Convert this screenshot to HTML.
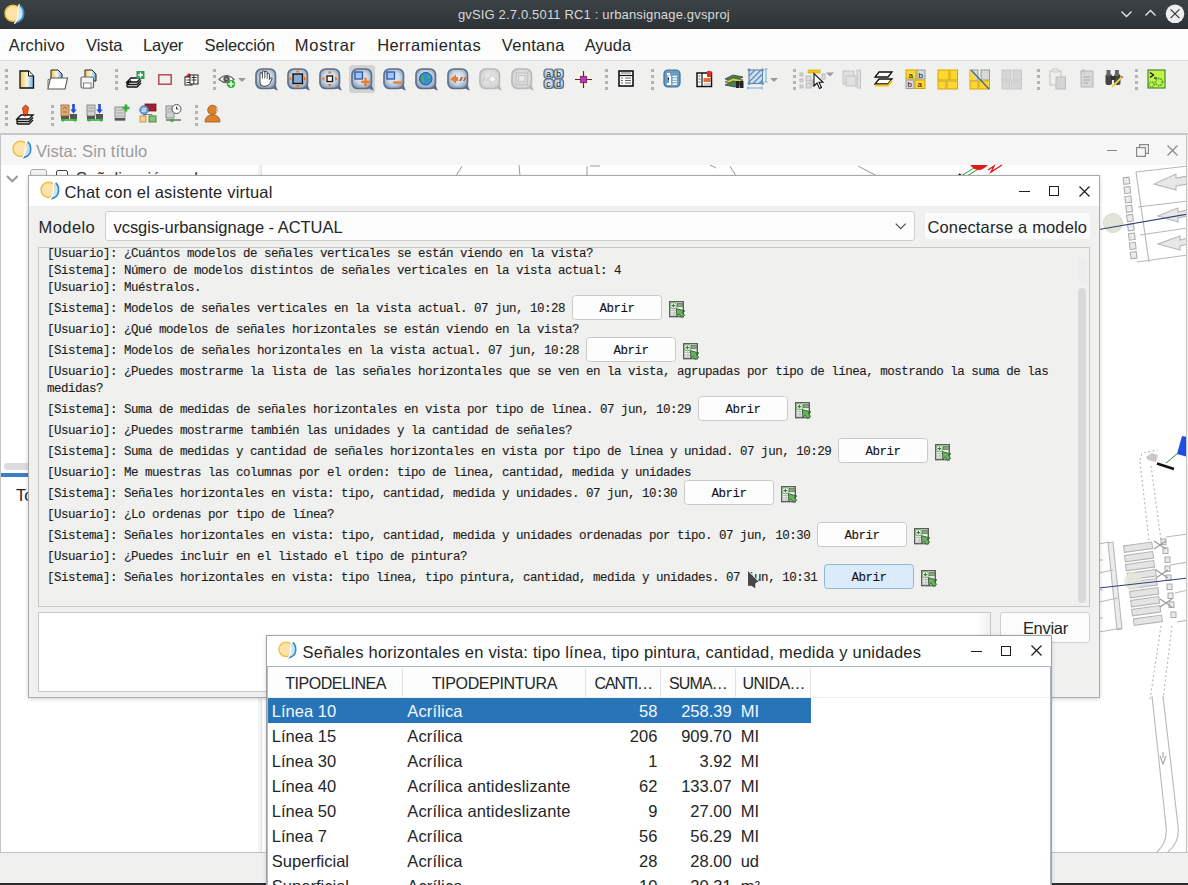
<!DOCTYPE html>
<html><head><meta charset="utf-8"><style>
html,body{margin:0;padding:0;width:1188px;height:885px;overflow:hidden;background:#f0f0ee;position:relative}
.t{position:absolute;white-space:pre;line-height:0;}
svg{overflow:visible}
</style></head><body>
<div style="position:absolute;left:0px;top:0px;width:1188px;height:29px;background:linear-gradient(#3c4347,#2d3236)"></div><svg style="position:absolute;left:4px;top:3px" width="21" height="21" viewBox="0 0 21 21"><g transform="scale(1.05)">
    <circle cx="8.6" cy="9.8" r="7.6" fill="#fde3a8" stroke="#efbd48" stroke-width="1.5"/>
    <path d="M14.5 1.8 Q19.2 5 18.8 11 Q18.2 17.8 10.5 19.2 Q14.2 15 14.3 10 Q14.3 5.5 14.5 1.8 Z" fill="#c3e6f8"/>
    <path d="M15.8 2.8 Q18.9 5.5 18.6 11 Q18.1 17.4 10.8 18.8" stroke="#3a88cc" stroke-width="1.7" fill="none"/>
    <path d="M14.6 1 Q12.8 5 13.3 10 Q13.6 15.5 9.8 19.8" stroke="#ffffff" stroke-width="1.2" fill="none"/></g></svg><span class=t id="title" style="left:457.90px;top:14.50px;font-family:'Liberation Sans', sans-serif;font-size:13px;color:#d6d8d9;letter-spacing:0.163px;">gvSIG 2.7.0.5011 RC1 : urbansignage.gvsproj</span><svg style="position:absolute;left:1121px;top:11px" width="12" height="7" viewBox="0 0 12 7"><path d="M0.5 0.5 L5.5 5.5 L10.5 0.5" stroke="#e8e8e8" stroke-width="1.3" fill="none"/></svg><svg style="position:absolute;left:1145px;top:10px" width="12" height="7" viewBox="0 0 12 7"><path d="M0.5 5.5 L5.5 0.5 L10.5 5.5" stroke="#e8e8e8" stroke-width="1.3" fill="none"/></svg><svg style="position:absolute;left:1165px;top:4px" width="20" height="20" viewBox="0 0 20 20"><circle cx="10" cy="9.8" r="9.3" fill="#eeeeee"/><path d="M5.6 5.4 L14.4 14.2 M14.4 5.4 L5.6 14.2" stroke="#31363b" stroke-width="1.2"/></svg><div style="position:absolute;left:0px;top:29px;width:1188px;height:31px;background:#fcfcfc"></div><div style="position:absolute;left:0px;top:60px;width:1188px;height:1px;background:#d9d9d9"></div><span class=t id="m1" style="left:8.80px;top:45.28px;font-family:'Liberation Sans', sans-serif;font-size:16.5px;color:#232627;letter-spacing:0.153px;">Archivo</span><span class=t id="m2" style="left:85.90px;top:45.28px;font-family:'Liberation Sans', sans-serif;font-size:16.5px;color:#232627;letter-spacing:0.042px;">Vista</span><span class=t id="m3" style="left:143.10px;top:45.28px;font-family:'Liberation Sans', sans-serif;font-size:16.5px;color:#232627;letter-spacing:-0.256px;">Layer</span><span class=t id="m4" style="left:204.60px;top:45.28px;font-family:'Liberation Sans', sans-serif;font-size:16.5px;color:#232627;letter-spacing:-0.150px;">Selección</span><span class=t id="m5" style="left:294.80px;top:45.28px;font-family:'Liberation Sans', sans-serif;font-size:16.5px;color:#232627;letter-spacing:0.725px;">Mostrar</span><span class=t id="m6" style="left:377.20px;top:45.28px;font-family:'Liberation Sans', sans-serif;font-size:16.5px;color:#232627;letter-spacing:0.404px;">Herramientas</span><span class=t id="m7" style="left:501.70px;top:45.28px;font-family:'Liberation Sans', sans-serif;font-size:16.5px;color:#232627;letter-spacing:0.348px;">Ventana</span><span class=t id="m8" style="left:584.70px;top:45.28px;font-family:'Liberation Sans', sans-serif;font-size:16.5px;color:#232627;letter-spacing:-0.020px;">Ayuda</span><div style="position:absolute;left:0px;top:61px;width:1188px;height:72px;background:#f0f0ee"></div><div style="position:absolute;left:0px;top:133px;width:1188px;height:1px;background:#c9c9c9"></div><div style="position:absolute;left:5px;top:69px;width:3px;height:3px;background:#b3b3b3"></div><div style="position:absolute;left:5px;top:75px;width:3px;height:3px;background:#b3b3b3"></div><div style="position:absolute;left:5px;top:81px;width:3px;height:3px;background:#b3b3b3"></div><div style="position:absolute;left:5px;top:87px;width:3px;height:3px;background:#b3b3b3"></div><div style="position:absolute;left:115px;top:69px;width:3px;height:3px;background:#b3b3b3"></div><div style="position:absolute;left:115px;top:75px;width:3px;height:3px;background:#b3b3b3"></div><div style="position:absolute;left:115px;top:81px;width:3px;height:3px;background:#b3b3b3"></div><div style="position:absolute;left:115px;top:87px;width:3px;height:3px;background:#b3b3b3"></div><div style="position:absolute;left:213px;top:69px;width:3px;height:3px;background:#b3b3b3"></div><div style="position:absolute;left:213px;top:75px;width:3px;height:3px;background:#b3b3b3"></div><div style="position:absolute;left:213px;top:81px;width:3px;height:3px;background:#b3b3b3"></div><div style="position:absolute;left:213px;top:87px;width:3px;height:3px;background:#b3b3b3"></div><div style="position:absolute;left:605px;top:69px;width:3px;height:3px;background:#b3b3b3"></div><div style="position:absolute;left:605px;top:75px;width:3px;height:3px;background:#b3b3b3"></div><div style="position:absolute;left:605px;top:81px;width:3px;height:3px;background:#b3b3b3"></div><div style="position:absolute;left:605px;top:87px;width:3px;height:3px;background:#b3b3b3"></div><div style="position:absolute;left:651px;top:69px;width:3px;height:3px;background:#b3b3b3"></div><div style="position:absolute;left:651px;top:75px;width:3px;height:3px;background:#b3b3b3"></div><div style="position:absolute;left:651px;top:81px;width:3px;height:3px;background:#b3b3b3"></div><div style="position:absolute;left:651px;top:87px;width:3px;height:3px;background:#b3b3b3"></div><div style="position:absolute;left:793px;top:69px;width:3px;height:3px;background:#b3b3b3"></div><div style="position:absolute;left:793px;top:75px;width:3px;height:3px;background:#b3b3b3"></div><div style="position:absolute;left:793px;top:81px;width:3px;height:3px;background:#b3b3b3"></div><div style="position:absolute;left:793px;top:87px;width:3px;height:3px;background:#b3b3b3"></div><div style="position:absolute;left:1037px;top:69px;width:3px;height:3px;background:#b3b3b3"></div><div style="position:absolute;left:1037px;top:75px;width:3px;height:3px;background:#b3b3b3"></div><div style="position:absolute;left:1037px;top:81px;width:3px;height:3px;background:#b3b3b3"></div><div style="position:absolute;left:1037px;top:87px;width:3px;height:3px;background:#b3b3b3"></div><div style="position:absolute;left:1135px;top:69px;width:3px;height:3px;background:#b3b3b3"></div><div style="position:absolute;left:1135px;top:75px;width:3px;height:3px;background:#b3b3b3"></div><div style="position:absolute;left:1135px;top:81px;width:3px;height:3px;background:#b3b3b3"></div><div style="position:absolute;left:1135px;top:87px;width:3px;height:3px;background:#b3b3b3"></div><div style="position:absolute;left:5px;top:105px;width:3px;height:3px;background:#b3b3b3"></div><div style="position:absolute;left:5px;top:111px;width:3px;height:3px;background:#b3b3b3"></div><div style="position:absolute;left:5px;top:117px;width:3px;height:3px;background:#b3b3b3"></div><div style="position:absolute;left:5px;top:123px;width:3px;height:3px;background:#b3b3b3"></div><div style="position:absolute;left:51px;top:105px;width:3px;height:3px;background:#b3b3b3"></div><div style="position:absolute;left:51px;top:111px;width:3px;height:3px;background:#b3b3b3"></div><div style="position:absolute;left:51px;top:117px;width:3px;height:3px;background:#b3b3b3"></div><div style="position:absolute;left:51px;top:123px;width:3px;height:3px;background:#b3b3b3"></div><div style="position:absolute;left:195px;top:105px;width:3px;height:3px;background:#b3b3b3"></div><div style="position:absolute;left:195px;top:111px;width:3px;height:3px;background:#b3b3b3"></div><div style="position:absolute;left:195px;top:117px;width:3px;height:3px;background:#b3b3b3"></div><div style="position:absolute;left:195px;top:123px;width:3px;height:3px;background:#b3b3b3"></div><div style="position:absolute;left:0px;top:134px;width:1188px;height:751px;background:#f0f0ee"></div><div style="position:absolute;left:0px;top:134px;width:1187px;height:1px;background:#c4c4c4"></div><div style="position:absolute;left:0px;top:134px;width:1px;height:718px;background:#c4c4c4"></div><div style="position:absolute;left:1186px;top:134px;width:1px;height:718px;background:#c4c4c4"></div><div style="position:absolute;left:1px;top:135px;width:1185px;height:30px;background:#f6f6f6"></div><svg style="position:absolute;left:12px;top:139px" width="20" height="20" viewBox="0 0 20 20"><g transform="scale(1.0)">
    <circle cx="8.6" cy="9.8" r="7.6" fill="#fde3a8" stroke="#efbd48" stroke-width="1.5"/>
    <path d="M14.5 1.8 Q19.2 5 18.8 11 Q18.2 17.8 10.5 19.2 Q14.2 15 14.3 10 Q14.3 5.5 14.5 1.8 Z" fill="#c3e6f8"/>
    <path d="M15.8 2.8 Q18.9 5.5 18.6 11 Q18.1 17.4 10.8 18.8" stroke="#3a88cc" stroke-width="1.7" fill="none"/>
    <path d="M14.6 1 Q12.8 5 13.3 10 Q13.6 15.5 9.8 19.8" stroke="#ffffff" stroke-width="1.2" fill="none"/></g></svg><span class=t id="vtitle" style="left:35.90px;top:151.28px;font-family:'Liberation Sans', sans-serif;font-size:16.5px;color:#9b9b9b;letter-spacing:0.090px;">Vista: Sin título</span><div style="position:absolute;left:1107px;top:150px;width:10px;height:1.3px;background:#8a8a8a"></div><svg style="position:absolute;left:1136px;top:144px" width="13" height="13" viewBox="0 0 13 13"><rect x="0.6" y="3.6" width="8.8" height="8.8" fill="none" stroke="#8a8a8a" stroke-width="1.2"/><path d="M3.6 3.6 V0.6 H12.4 V9.4 H9.4" fill="none" stroke="#8a8a8a" stroke-width="1.2"/></svg><svg style="position:absolute;left:1167px;top:145px" width="11" height="11" viewBox="0 0 11 11"><path d="M0.5 0.5 L10.5 10.5 M10.5 0.5 L0.5 10.5" stroke="#8a8a8a" stroke-width="1.2"/></svg><div style="position:absolute;left:1px;top:165px;width:1185px;height:687px;background:#ffffff"></div><div style="position:absolute;left:0px;top:852px;width:1188px;height:1px;background:#c0c0c0"></div><div style="position:absolute;left:2px;top:853px;width:1184px;height:30px;background:#f0f0ee"></div><div style="position:absolute;left:0px;top:883px;width:1188px;height:2px;background:#2a2d30"></div><div style="position:absolute;left:258px;top:165px;width:4px;height:687px;background:#f3f3f3"></div><div style="position:absolute;left:261px;top:165px;width:1px;height:687px;background:#e2e2e2"></div><svg style="position:absolute;left:6px;top:175px" width="13" height="8" viewBox="0 0 13 8"><path d="M1 1 L6.3 6.3 L11.6 1" stroke="#9a9a9a" stroke-width="2.1" fill="none"/></svg><div style="position:absolute;left:29.5px;top:169px;width:17px;height:12px;border:1px solid #a8a8a8;border-radius:3px;background:#f4f4f4;box-sizing:border-box"></div><div style="position:absolute;left:56px;top:170px;width:12px;height:9px;border:1.2px solid #444;border-radius:2px;box-sizing:border-box;background:#fff"></div><span class=t id="toclayer" style="left:76.00px;top:177.78px;font-family:'Liberation Sans', sans-serif;font-size:16.5px;color:#333333;letter-spacing:0.000px;">Señalización ord</span><div style="position:absolute;left:4px;top:463px;width:254px;height:6.5px;background:#dcdcdc;border-radius:3px"></div><div style="position:absolute;left:1px;top:473px;width:257px;height:3.5px;background:#3c7fc4"></div><span class=t id="tocto" style="left:16.00px;top:495.48px;font-family:'Liberation Sans', sans-serif;font-size:16.5px;color:#232627;letter-spacing:0.000px;">Todas</span><svg style="position:absolute;left:0;top:0;overflow:hidden" width="1186" height="852" viewBox="0 0 1186 852">
<g stroke="#b7b7b7" fill="none" stroke-width="1.1">
<path d="M1136 172 L1188 166 M1138 207 L1188 201 M1140 235 L1188 228 M1137 262 L1188 255 M1136 172 L1149 262"/>
<path d="M1188 176 L1176 178 L1176 174 L1154 184 L1176 190 L1176 186 L1188 184" fill="#e8e8e8"/>
<path d="M1188 210 L1178 212 L1178 208 L1158 216 L1178 222 L1178 218 L1188 216" fill="#e8e8e8"/>
<path d="M1188 238 L1180 240 L1180 236 L1158 244 L1180 250 L1180 246 L1188 244" fill="#e8e8e8"/>
</g>
<g fill="#ececec" stroke="#a9a9a9" stroke-width="1"><rect x="1123.0" y="178.0" width="6" height="6.5" transform="rotate(-8 1123.0 178.0)"/><rect x="1123.9" y="187.3" width="6" height="6.5" transform="rotate(-8 1123.9 187.3)"/><rect x="1124.8" y="196.6" width="6" height="6.5" transform="rotate(-8 1124.8 196.6)"/><rect x="1125.7" y="205.9" width="6" height="6.5" transform="rotate(-8 1125.7 205.9)"/><rect x="1126.6" y="215.2" width="6" height="6.5" transform="rotate(-8 1126.6 215.2)"/><rect x="1127.5" y="224.5" width="6" height="6.5" transform="rotate(-8 1127.5 224.5)"/><rect x="1128.4" y="233.8" width="6" height="6.5" transform="rotate(-8 1128.4 233.8)"/><rect x="1129.3" y="243.1" width="6" height="6.5" transform="rotate(-8 1129.3 243.1)"/><rect x="1130.2" y="252.4" width="6" height="6.5" transform="rotate(-8 1130.2 252.4)"/></g>
<circle cx="1113" cy="223" r="9.5" fill="#dfe6d6" stroke="#d2dac8"/>
<path d="M1099 229.5 L1188 214" stroke="#333d7a" stroke-width="1.1"/>
<g stroke="#b5b5b5" stroke-dasharray="2 2.5" fill="none" stroke-width="1.1">
<path d="M1140 460 L1142 453 L1158 450 M1140 462 L1149 540 M1151 466 L1161 540"/>
<path d="M1161 626 L1150 700 M1172 626 L1163 700"/></g>
<path d="M1146 457 L1152 453 L1158 455 L1156 462 L1148 460 Z" fill="#c9c9c9"/>
<path d="M1166 463 L1178 453" stroke="#2a8a3a" stroke-width="1"/>
<path d="M1157 463.5 L1174 469" stroke="#111" stroke-width="2.6"/>
<path d="M1182 436 L1188 437 L1188 457 L1177 454 Z" fill="#1f4fe0"/>
<g fill="#e4e4e4" stroke="#b3b3b3" stroke-width="1"><rect x="1123.5" y="546.0" width="28.5" height="6.5" transform="rotate(-8 1123.5 546.0)"/><rect x="1124.5" y="555.5" width="28.5" height="6.5" transform="rotate(-8 1124.5 555.5)"/><rect x="1125.5" y="564.5" width="28.5" height="6.5" transform="rotate(-8 1125.5 564.5)"/><rect x="1127.2" y="573.5" width="28.5" height="6.5" transform="rotate(-8 1127.2 573.5)"/><rect x="1128.2" y="582.5" width="28.5" height="6.5" transform="rotate(-8 1128.2 582.5)"/><rect x="1129.6" y="591.5" width="28.5" height="6.5" transform="rotate(-8 1129.6 591.5)"/><rect x="1130.6" y="600.5" width="28.5" height="6.5" transform="rotate(-8 1130.6 600.5)"/><rect x="1131.6" y="609.5" width="28.5" height="6.5" transform="rotate(-8 1131.6 609.5)"/><rect x="1133.3" y="619.0" width="28.5" height="6.5" transform="rotate(-8 1133.3 619.0)"/></g>
<g fill="#ececec" stroke="#a9a9a9" stroke-width="1"><rect x="1161" y="539" width="5" height="5.5"/><rect x="1163" y="548" width="5" height="5.5"/><rect x="1165" y="557" width="5" height="5.5"/><rect x="1165" y="566" width="5" height="5.5"/><rect x="1166" y="575" width="5" height="5.5"/><rect x="1167" y="584" width="5" height="5.5"/><rect x="1168" y="593" width="5" height="5.5"/><rect x="1169" y="602" width="5" height="5.5"/><rect x="1171" y="612" width="5" height="5.5"/></g>
<path d="M1108 543 L1113 542 L1122 629 L1117 630 Z" fill="#ebebeb" stroke="#b5b5b5"/>
<g stroke="#b9b9b9" fill="none" stroke-width="1.1">
<path d="M1099 544 L1109 542 M1099 573 L1113 570 M1099 602 L1118 598 M1099 632 L1122 628 M1099 560 L1103 560 M1099 590 L1103 590 M1099 618 L1103 618"/>
<path d="M1166 537 L1188 534 M1170 565 L1188 562 M1175 593 L1188 590 M1177 622 L1188 620"/>
<path d="M1152 696 L1166 826 Q1168 842 1157 852 M1163 696 L1178 826 Q1180 842 1168 852"/>
</g>
<g stroke="#9a9a9a" stroke-width="1.2"><path d="M1154 541 L1166 549 M1166 541 L1154 549 M1156 570 L1168 578 M1168 570 L1156 578 M1160 599 L1172 607 M1172 599 L1160 607"/></g>
<circle cx="1133" cy="581" r="9" fill="#e3e7da" opacity="0.8"/>
<path d="M1099 588 L1188 578" stroke="#333d7a" stroke-width="1.1"/>
<path d="M1160 756 l3 8 l3 -8 M1163 752 v6" stroke="#aaa" fill="none" stroke-width="1.2"/>
</svg><svg style="position:absolute;left:440px;top:165px" width="600" height="12" viewBox="0 0 600 12"><g stroke="#9a9a9a" stroke-width="1" fill="none">
<path d="M16 11 L22 1 M80 11 L79 0 M147 11 L147 1 M150 1 L160 1 M290 1 L296 11 M418 1 L437 11 M270 0 L276 3"/></g>
<path d="M519 9 L522 12" stroke="#111" stroke-width="2"/>
<path d="M521 11 L534 3 M527 11 L540 3" stroke="#2a9a3a" stroke-width="1"/>
<path d="M530 0 Q538 10 548 0 Z" fill="#e01818"/><path d="M548 5 L554 1 L551 7 L562 0" stroke="#e01818" stroke-width="1.4" fill="none"/></svg><div style="position:absolute;left:28px;top:175px;width:1072px;height:523px;background:#f0f0ee;box-shadow:0 1px 4px rgba(0,0,0,0.18)"></div><div style="position:absolute;left:28px;top:175px;width:1072px;height:523px;border:1px solid #a9a9a9;box-sizing:border-box"></div><div style="position:absolute;left:29px;top:176px;width:1070px;height:30px;background:#ffffff"></div><svg style="position:absolute;left:40px;top:180px" width="20" height="20" viewBox="0 0 20 20"><g transform="scale(1.0)">
    <circle cx="8.6" cy="9.8" r="7.6" fill="#fde3a8" stroke="#efbd48" stroke-width="1.5"/>
    <path d="M14.5 1.8 Q19.2 5 18.8 11 Q18.2 17.8 10.5 19.2 Q14.2 15 14.3 10 Q14.3 5.5 14.5 1.8 Z" fill="#c3e6f8"/>
    <path d="M15.8 2.8 Q18.9 5.5 18.6 11 Q18.1 17.4 10.8 18.8" stroke="#3a88cc" stroke-width="1.7" fill="none"/>
    <path d="M14.6 1 Q12.8 5 13.3 10 Q13.6 15.5 9.8 19.8" stroke="#ffffff" stroke-width="1.2" fill="none"/></g></svg><span class=t id="ctitle" style="left:64.50px;top:192.28px;font-family:'Liberation Sans', sans-serif;font-size:16.5px;color:#232627;letter-spacing:0.183px;">Chat con el asistente virtual</span><div style="position:absolute;left:1019px;top:191px;width:11px;height:1.3px;background:#1f1f1f"></div><div style="position:absolute;left:1049px;top:186px;width:10px;height:10px;border:1.3px solid #1f1f1f;box-sizing:border-box"></div><svg style="position:absolute;left:1079px;top:186px" width="11" height="11" viewBox="0 0 11 11"><path d="M0.5 0.5 L10.5 10.5 M10.5 0.5 L0.5 10.5" stroke="#1f1f1f" stroke-width="1.3"/></svg><span class=t id="modelo" style="left:38.60px;top:226.88px;font-family:'Liberation Sans', sans-serif;font-size:16.5px;color:#232627;letter-spacing:0.413px;">Modelo</span><div style="position:absolute;left:105px;top:211px;width:810px;height:30px;background:#fcfcfc;border:1px solid #cfcfcf;border-radius:3px;box-sizing:border-box"></div><span class=t id="combo" style="left:113.50px;top:226.88px;font-family:'Liberation Sans', sans-serif;font-size:16.5px;color:#232627;letter-spacing:-0.042px;">vcsgis-urbansignage - ACTUAL</span><svg style="position:absolute;left:895px;top:223px" width="12" height="7" viewBox="0 0 12 7"><path d="M0.7 0.7 L5.7 5.7 L10.7 0.7" stroke="#4a4a4a" stroke-width="1.2" fill="none"/></svg><div style="position:absolute;left:925px;top:213px;width:165px;height:26px;background:#fafafa"></div><span class=t id="conectar" style="left:927.40px;top:227.48px;font-family:'Liberation Sans', sans-serif;font-size:16.5px;color:#232627;letter-spacing:0.156px;">Conectarse a modelo</span><div style="position:absolute;left:38px;top:247px;width:1052px;height:360px;background:#f0f0ee;border:1px solid #c6c6c6;box-sizing:border-box"></div><div style="position:absolute;left:1078px;top:288px;width:8px;height:315px;background:#d9d9d9;border-radius:4px"></div><div style="position:absolute;left:1078px;top:258px;width:8px;height:24px;background:#ececec;border-radius:4px"></div><div style="position:absolute;left:38px;top:612px;width:953px;height:80px;background:linear-gradient(to right,#ffffff 0,#ffffff 937px,#f0f0f0 951px);border:1px solid #c6c6c6;box-sizing:border-box"></div><div style="position:absolute;left:1000px;top:612px;width:90px;height:31px;background:#fcfcfc;border:1px solid #d0d0d0;border-radius:3px;box-sizing:border-box"></div><span class=t id="enviar" style="left:1022.90px;top:628.28px;font-family:'Liberation Sans', sans-serif;font-size:16.5px;color:#232627;letter-spacing:-0.297px;">Enviar</span><div style="position:absolute;left:39px;top:248px;width:1038px;height:358px;overflow:hidden"><span class=t style="left:8.00px;top:5.87px;font-family:'Liberation Mono', monospace;font-size:12.5px;letter-spacing:-0.500px;color:#1c1c1c;-webkit-text-stroke:0.12px #1c1c1c">[Usuario]: ¿Cuántos modelos de señales verticales se están viendo en la vista?</span><span class=t style="left:8.00px;top:22.87px;font-family:'Liberation Mono', monospace;font-size:12.5px;letter-spacing:-0.500px;color:#1c1c1c;-webkit-text-stroke:0.12px #1c1c1c">[Sistema]: Número de modelos distintos de señales verticales en la vista actual: 4</span><span class=t style="left:8.00px;top:39.87px;font-family:'Liberation Mono', monospace;font-size:12.5px;letter-spacing:-0.500px;color:#1c1c1c;-webkit-text-stroke:0.12px #1c1c1c">[Usuario]: Muéstralos.</span><span class=t style="left:8.00px;top:60.67px;font-family:'Liberation Mono', monospace;font-size:12.5px;letter-spacing:-0.500px;color:#1c1c1c;-webkit-text-stroke:0.12px #1c1c1c">[Sistema]: Modelos de señales verticales en la vista actual. 07 jun, 10:28</span><div style="position:absolute;left:533.00px;top:47.30px;width:89.5px;height:24.4px;box-sizing:border-box;background:#fdfdfd;border:1px solid #c9c9c9;border-radius:3.5px"></div><span class=t style="left:560.55px;top:60.67px;font-family:'Liberation Mono', monospace;font-size:12.5px;letter-spacing:-0.500px;color:#141414;-webkit-text-stroke:0.12px #141414">Abrir</span><svg style="position:absolute;left:630px;top:53px" width="18" height="18" viewBox="0 0 18 18"><rect x="0.7" y="0.7" width="13.6" height="15" fill="#f2f2f2" stroke="#4e5a4c" stroke-width="1.3"/><path d="M1 9.5 H14 M1 12 H14 M1 14.2 H14 M5 9 V15.5 M9.5 9 V15.5" stroke="#b8b8b8" stroke-width="0.9"/><rect x="8.3" y="2.3" width="5" height="3.5" fill="#86a880" stroke="#4e6a4a" stroke-width="0.6"/><circle cx="4.4" cy="4.6" r="3.3" fill="#f6faf4" stroke="#6a9a62" stroke-width="0.9"/><path d="M4.4 2.6 V6.6 M2.4 4.6 H6.4" stroke="#3f7a36" stroke-width="1.1"/><path d="M7.3 7.6 L7.9 15.2 L10.1 13.1 L12.6 16.6 L15.6 14.4 L13.1 11 L15.9 10 Z" fill="#6cb062" stroke="#2e5f2a" stroke-width="0.9"/></svg><span class=t style="left:8.00px;top:81.87px;font-family:'Liberation Mono', monospace;font-size:12.5px;letter-spacing:-0.500px;color:#1c1c1c;-webkit-text-stroke:0.12px #1c1c1c">[Usuario]: ¿Qué modelos de señales horizontales se están viendo en la vista?</span><span class=t style="left:8.00px;top:102.67px;font-family:'Liberation Mono', monospace;font-size:12.5px;letter-spacing:-0.500px;color:#1c1c1c;-webkit-text-stroke:0.12px #1c1c1c">[Sistema]: Modelos de señales horizontales en la vista actual. 07 jun, 10:28</span><div style="position:absolute;left:547.00px;top:89.30px;width:89.5px;height:24.4px;box-sizing:border-box;background:#fdfdfd;border:1px solid #c9c9c9;border-radius:3.5px"></div><span class=t style="left:574.55px;top:102.67px;font-family:'Liberation Mono', monospace;font-size:12.5px;letter-spacing:-0.500px;color:#141414;-webkit-text-stroke:0.12px #141414">Abrir</span><svg style="position:absolute;left:644px;top:95px" width="18" height="18" viewBox="0 0 18 18"><rect x="0.7" y="0.7" width="13.6" height="15" fill="#f2f2f2" stroke="#4e5a4c" stroke-width="1.3"/><path d="M1 9.5 H14 M1 12 H14 M1 14.2 H14 M5 9 V15.5 M9.5 9 V15.5" stroke="#b8b8b8" stroke-width="0.9"/><rect x="8.3" y="2.3" width="5" height="3.5" fill="#86a880" stroke="#4e6a4a" stroke-width="0.6"/><circle cx="4.4" cy="4.6" r="3.3" fill="#f6faf4" stroke="#6a9a62" stroke-width="0.9"/><path d="M4.4 2.6 V6.6 M2.4 4.6 H6.4" stroke="#3f7a36" stroke-width="1.1"/><path d="M7.3 7.6 L7.9 15.2 L10.1 13.1 L12.6 16.6 L15.6 14.4 L13.1 11 L15.9 10 Z" fill="#6cb062" stroke="#2e5f2a" stroke-width="0.9"/></svg><span class=t style="left:8.00px;top:123.87px;font-family:'Liberation Mono', monospace;font-size:12.5px;letter-spacing:-0.500px;color:#1c1c1c;-webkit-text-stroke:0.12px #1c1c1c">[Usuario]: ¿Puedes mostrarme la lista de las señales horizontales que se ven en la vista, agrupadas por tipo de línea, mostrando la suma de las</span><span class=t style="left:8.00px;top:140.87px;font-family:'Liberation Mono', monospace;font-size:12.5px;letter-spacing:-0.500px;color:#1c1c1c;-webkit-text-stroke:0.12px #1c1c1c">medidas?</span><span class=t style="left:8.00px;top:161.67px;font-family:'Liberation Mono', monospace;font-size:12.5px;letter-spacing:-0.500px;color:#1c1c1c;-webkit-text-stroke:0.12px #1c1c1c">[Sistema]: Suma de medidas de señales horizontales en vista por tipo de línea. 07 jun, 10:29</span><div style="position:absolute;left:659.00px;top:148.30px;width:89.5px;height:24.4px;box-sizing:border-box;background:#fdfdfd;border:1px solid #c9c9c9;border-radius:3.5px"></div><span class=t style="left:686.55px;top:161.67px;font-family:'Liberation Mono', monospace;font-size:12.5px;letter-spacing:-0.500px;color:#141414;-webkit-text-stroke:0.12px #141414">Abrir</span><svg style="position:absolute;left:756px;top:154px" width="18" height="18" viewBox="0 0 18 18"><rect x="0.7" y="0.7" width="13.6" height="15" fill="#f2f2f2" stroke="#4e5a4c" stroke-width="1.3"/><path d="M1 9.5 H14 M1 12 H14 M1 14.2 H14 M5 9 V15.5 M9.5 9 V15.5" stroke="#b8b8b8" stroke-width="0.9"/><rect x="8.3" y="2.3" width="5" height="3.5" fill="#86a880" stroke="#4e6a4a" stroke-width="0.6"/><circle cx="4.4" cy="4.6" r="3.3" fill="#f6faf4" stroke="#6a9a62" stroke-width="0.9"/><path d="M4.4 2.6 V6.6 M2.4 4.6 H6.4" stroke="#3f7a36" stroke-width="1.1"/><path d="M7.3 7.6 L7.9 15.2 L10.1 13.1 L12.6 16.6 L15.6 14.4 L13.1 11 L15.9 10 Z" fill="#6cb062" stroke="#2e5f2a" stroke-width="0.9"/></svg><span class=t style="left:8.00px;top:182.87px;font-family:'Liberation Mono', monospace;font-size:12.5px;letter-spacing:-0.500px;color:#1c1c1c;-webkit-text-stroke:0.12px #1c1c1c">[Usuario]: ¿Puedes mostrarme también las unidades y la cantidad de señales?</span><span class=t style="left:8.00px;top:203.67px;font-family:'Liberation Mono', monospace;font-size:12.5px;letter-spacing:-0.500px;color:#1c1c1c;-webkit-text-stroke:0.12px #1c1c1c">[Sistema]: Suma de medidas y cantidad de señales horizontales en vista por tipo de línea y unidad. 07 jun, 10:29</span><div style="position:absolute;left:799.00px;top:190.30px;width:89.5px;height:24.4px;box-sizing:border-box;background:#fdfdfd;border:1px solid #c9c9c9;border-radius:3.5px"></div><span class=t style="left:826.55px;top:203.67px;font-family:'Liberation Mono', monospace;font-size:12.5px;letter-spacing:-0.500px;color:#141414;-webkit-text-stroke:0.12px #141414">Abrir</span><svg style="position:absolute;left:896px;top:196px" width="18" height="18" viewBox="0 0 18 18"><rect x="0.7" y="0.7" width="13.6" height="15" fill="#f2f2f2" stroke="#4e5a4c" stroke-width="1.3"/><path d="M1 9.5 H14 M1 12 H14 M1 14.2 H14 M5 9 V15.5 M9.5 9 V15.5" stroke="#b8b8b8" stroke-width="0.9"/><rect x="8.3" y="2.3" width="5" height="3.5" fill="#86a880" stroke="#4e6a4a" stroke-width="0.6"/><circle cx="4.4" cy="4.6" r="3.3" fill="#f6faf4" stroke="#6a9a62" stroke-width="0.9"/><path d="M4.4 2.6 V6.6 M2.4 4.6 H6.4" stroke="#3f7a36" stroke-width="1.1"/><path d="M7.3 7.6 L7.9 15.2 L10.1 13.1 L12.6 16.6 L15.6 14.4 L13.1 11 L15.9 10 Z" fill="#6cb062" stroke="#2e5f2a" stroke-width="0.9"/></svg><span class=t style="left:8.00px;top:224.87px;font-family:'Liberation Mono', monospace;font-size:12.5px;letter-spacing:-0.500px;color:#1c1c1c;-webkit-text-stroke:0.12px #1c1c1c">[Usuario]: Me muestras las columnas por el orden: tipo de linea, cantidad, medida y unidades</span><span class=t style="left:8.00px;top:245.67px;font-family:'Liberation Mono', monospace;font-size:12.5px;letter-spacing:-0.500px;color:#1c1c1c;-webkit-text-stroke:0.12px #1c1c1c">[Sistema]: Señales horizontales en vista: tipo, cantidad, medida y unidades. 07 jun, 10:30</span><div style="position:absolute;left:645.00px;top:232.30px;width:89.5px;height:24.4px;box-sizing:border-box;background:#fdfdfd;border:1px solid #c9c9c9;border-radius:3.5px"></div><span class=t style="left:672.55px;top:245.67px;font-family:'Liberation Mono', monospace;font-size:12.5px;letter-spacing:-0.500px;color:#141414;-webkit-text-stroke:0.12px #141414">Abrir</span><svg style="position:absolute;left:742px;top:238px" width="18" height="18" viewBox="0 0 18 18"><rect x="0.7" y="0.7" width="13.6" height="15" fill="#f2f2f2" stroke="#4e5a4c" stroke-width="1.3"/><path d="M1 9.5 H14 M1 12 H14 M1 14.2 H14 M5 9 V15.5 M9.5 9 V15.5" stroke="#b8b8b8" stroke-width="0.9"/><rect x="8.3" y="2.3" width="5" height="3.5" fill="#86a880" stroke="#4e6a4a" stroke-width="0.6"/><circle cx="4.4" cy="4.6" r="3.3" fill="#f6faf4" stroke="#6a9a62" stroke-width="0.9"/><path d="M4.4 2.6 V6.6 M2.4 4.6 H6.4" stroke="#3f7a36" stroke-width="1.1"/><path d="M7.3 7.6 L7.9 15.2 L10.1 13.1 L12.6 16.6 L15.6 14.4 L13.1 11 L15.9 10 Z" fill="#6cb062" stroke="#2e5f2a" stroke-width="0.9"/></svg><span class=t style="left:8.00px;top:266.87px;font-family:'Liberation Mono', monospace;font-size:12.5px;letter-spacing:-0.500px;color:#1c1c1c;-webkit-text-stroke:0.12px #1c1c1c">[Usuario]: ¿Lo ordenas por tipo de línea?</span><span class=t style="left:8.00px;top:287.67px;font-family:'Liberation Mono', monospace;font-size:12.5px;letter-spacing:-0.500px;color:#1c1c1c;-webkit-text-stroke:0.12px #1c1c1c">[Sistema]: Señales horizontales en vista: tipo, cantidad, medida y unidades ordenadas por tipo. 07 jun, 10:30</span><div style="position:absolute;left:778.00px;top:274.30px;width:89.5px;height:24.4px;box-sizing:border-box;background:#fdfdfd;border:1px solid #c9c9c9;border-radius:3.5px"></div><span class=t style="left:805.55px;top:287.67px;font-family:'Liberation Mono', monospace;font-size:12.5px;letter-spacing:-0.500px;color:#141414;-webkit-text-stroke:0.12px #141414">Abrir</span><svg style="position:absolute;left:875px;top:280px" width="18" height="18" viewBox="0 0 18 18"><rect x="0.7" y="0.7" width="13.6" height="15" fill="#f2f2f2" stroke="#4e5a4c" stroke-width="1.3"/><path d="M1 9.5 H14 M1 12 H14 M1 14.2 H14 M5 9 V15.5 M9.5 9 V15.5" stroke="#b8b8b8" stroke-width="0.9"/><rect x="8.3" y="2.3" width="5" height="3.5" fill="#86a880" stroke="#4e6a4a" stroke-width="0.6"/><circle cx="4.4" cy="4.6" r="3.3" fill="#f6faf4" stroke="#6a9a62" stroke-width="0.9"/><path d="M4.4 2.6 V6.6 M2.4 4.6 H6.4" stroke="#3f7a36" stroke-width="1.1"/><path d="M7.3 7.6 L7.9 15.2 L10.1 13.1 L12.6 16.6 L15.6 14.4 L13.1 11 L15.9 10 Z" fill="#6cb062" stroke="#2e5f2a" stroke-width="0.9"/></svg><span class=t style="left:8.00px;top:308.87px;font-family:'Liberation Mono', monospace;font-size:12.5px;letter-spacing:-0.500px;color:#1c1c1c;-webkit-text-stroke:0.12px #1c1c1c">[Usuario]: ¿Puedes incluir en el listado el tipo de pintura?</span><span class=t style="left:8.00px;top:329.67px;font-family:'Liberation Mono', monospace;font-size:12.5px;letter-spacing:-0.500px;color:#1c1c1c;-webkit-text-stroke:0.12px #1c1c1c">[Sistema]: Señales horizontales en vista: tipo línea, tipo pintura, cantidad, medida y unidades. 07 jun, 10:31</span><div style="position:absolute;left:785.00px;top:316.30px;width:89.5px;height:24.4px;box-sizing:border-box;background:#dcebf9;border:1px solid #93b5d8;border-radius:3.5px"></div><span class=t style="left:812.55px;top:329.67px;font-family:'Liberation Mono', monospace;font-size:12.5px;letter-spacing:-0.500px;color:#141414;-webkit-text-stroke:0.12px #141414">Abrir</span><svg style="position:absolute;left:882px;top:322px" width="18" height="18" viewBox="0 0 18 18"><rect x="0.7" y="0.7" width="13.6" height="15" fill="#f2f2f2" stroke="#4e5a4c" stroke-width="1.3"/><path d="M1 9.5 H14 M1 12 H14 M1 14.2 H14 M5 9 V15.5 M9.5 9 V15.5" stroke="#b8b8b8" stroke-width="0.9"/><rect x="8.3" y="2.3" width="5" height="3.5" fill="#86a880" stroke="#4e6a4a" stroke-width="0.6"/><circle cx="4.4" cy="4.6" r="3.3" fill="#f6faf4" stroke="#6a9a62" stroke-width="0.9"/><path d="M4.4 2.6 V6.6 M2.4 4.6 H6.4" stroke="#3f7a36" stroke-width="1.1"/><path d="M7.3 7.6 L7.9 15.2 L10.1 13.1 L12.6 16.6 L15.6 14.4 L13.1 11 L15.9 10 Z" fill="#6cb062" stroke="#2e5f2a" stroke-width="0.9"/></svg></div><svg style="position:absolute;left:745px;top:568px" width="16" height="24" viewBox="0 0 16 24"><path d="M2.5 2 L2.5 18.3 L6.5 18.3 L10.8 21.3 L10.8 15.3 L14.3 14 Z" fill="#474747" stroke="#ffffff" stroke-width="0.9" stroke-linejoin="round"/></svg><div style="position:absolute;left:266px;top:635px;width:786px;height:260px;background:#ffffff;box-shadow:0 1px 4px rgba(0,0,0,0.15)"></div><div style="position:absolute;left:266px;top:635px;width:786px;height:260px;border:1px solid #9ea2a6;box-sizing:border-box"></div><svg style="position:absolute;left:278px;top:640px" width="19" height="19" viewBox="0 0 19 19"><g transform="scale(0.95)">
    <circle cx="8.6" cy="9.8" r="7.6" fill="#fde3a8" stroke="#efbd48" stroke-width="1.5"/>
    <path d="M14.5 1.8 Q19.2 5 18.8 11 Q18.2 17.8 10.5 19.2 Q14.2 15 14.3 10 Q14.3 5.5 14.5 1.8 Z" fill="#c3e6f8"/>
    <path d="M15.8 2.8 Q18.9 5.5 18.6 11 Q18.1 17.4 10.8 18.8" stroke="#3a88cc" stroke-width="1.7" fill="none"/>
    <path d="M14.6 1 Q12.8 5 13.3 10 Q13.6 15.5 9.8 19.8" stroke="#ffffff" stroke-width="1.2" fill="none"/></g></svg><span class=t id="ttitle" style="left:302.60px;top:652.28px;font-family:'Liberation Sans', sans-serif;font-size:16.5px;color:#232627;letter-spacing:0.212px;">Señales horizontales en vista: tipo línea, tipo pintura, cantidad, medida y unidades</span><div style="position:absolute;left:971px;top:651px;width:11px;height:1.3px;background:#1f1f1f"></div><div style="position:absolute;left:1001px;top:646px;width:10px;height:10px;border:1.3px solid #1f1f1f;box-sizing:border-box"></div><svg style="position:absolute;left:1031px;top:645px" width="11" height="11" viewBox="0 0 11 11"><path d="M0.5 0.5 L10.5 10.5 M10.5 0.5 L0.5 10.5" stroke="#1f1f1f" stroke-width="1.3"/></svg><div style="position:absolute;left:267px;top:666px;width:784px;height:1px;background:#a9b8c8"></div><div style="position:absolute;left:267px;top:666px;width:1px;height:230px;background:#a9b8c8"></div><div style="position:absolute;left:1050px;top:666px;width:1px;height:230px;background:#a9b8c8"></div><div style="position:absolute;left:268px;top:667px;width:543px;height:30px;background:#fdfdfd"></div><div style="position:absolute;left:402px;top:668px;width:1px;height:29px;background:#e3e3e3"></div><div style="position:absolute;left:585px;top:668px;width:1px;height:29px;background:#e3e3e3"></div><div style="position:absolute;left:660px;top:668px;width:1px;height:29px;background:#e3e3e3"></div><div style="position:absolute;left:735px;top:668px;width:1px;height:29px;background:#e3e3e3"></div><div style="position:absolute;left:810px;top:668px;width:1px;height:29px;background:#e3e3e3"></div><div style="position:absolute;left:268px;top:697px;width:782px;height:1px;background:#f0f0f0"></div><span class=t id="h1" style="left:285.30px;top:683.76px;font-family:'Liberation Sans', sans-serif;font-size:16px;color:#232627;letter-spacing:-0.465px;">TIPODELINEA</span><span class=t id="h2" style="left:431.70px;top:683.76px;font-family:'Liberation Sans', sans-serif;font-size:16px;color:#232627;letter-spacing:-0.346px;">TIPODEPINTURA</span><span class=t id="h3" style="left:594.50px;top:683.76px;font-family:'Liberation Sans', sans-serif;font-size:16px;color:#232627;letter-spacing:-1.083px;">CANTI…</span><span class=t id="h4" style="left:669.00px;top:683.76px;font-family:'Liberation Sans', sans-serif;font-size:16px;color:#232627;letter-spacing:-0.847px;">SUMA…</span><span class=t id="h5" style="left:742.50px;top:683.76px;font-family:'Liberation Sans', sans-serif;font-size:16px;color:#232627;letter-spacing:-0.547px;">UNIDA…</span><div style="position:absolute;left:268px;top:698px;width:543px;height:25px;background:#2874b9"></div><span class=t id="c0a" style="left:271.80px;top:711.48px;font-family:'Liberation Sans', sans-serif;font-size:16.5px;color:#f4f8fc;letter-spacing:0.000px;letter-spacing:0.02px">Línea 10</span><span class=t id="c0b" style="left:407.30px;top:711.48px;font-family:'Liberation Sans', sans-serif;font-size:16.5px;color:#f4f8fc;letter-spacing:0.000px;letter-spacing:0.16px">Acrílica</span><span class=t id="c0c" style="right:530.70px;top:711.48px;font-family:'Liberation Sans', sans-serif;font-size:16.5px;color:#f4f8fc;letter-spacing:0.000px;">58</span><span class=t id="c0d" style="right:456.40px;top:711.48px;font-family:'Liberation Sans', sans-serif;font-size:16.5px;color:#f4f8fc;letter-spacing:0.000px;">258.39</span><span class=t id="c0e" style="left:740.70px;top:711.48px;font-family:'Liberation Sans', sans-serif;font-size:16.5px;color:#f4f8fc;letter-spacing:0.000px;">MI</span><span class=t id="c1a" style="left:271.80px;top:736.48px;font-family:'Liberation Sans', sans-serif;font-size:16.5px;color:#232627;letter-spacing:0.000px;letter-spacing:0.02px">Línea 15</span><span class=t id="c1b" style="left:407.30px;top:736.48px;font-family:'Liberation Sans', sans-serif;font-size:16.5px;color:#232627;letter-spacing:0.000px;letter-spacing:0.16px">Acrílica</span><span class=t id="c1c" style="right:530.70px;top:736.48px;font-family:'Liberation Sans', sans-serif;font-size:16.5px;color:#232627;letter-spacing:0.000px;">206</span><span class=t id="c1d" style="right:456.40px;top:736.48px;font-family:'Liberation Sans', sans-serif;font-size:16.5px;color:#232627;letter-spacing:0.000px;">909.70</span><span class=t id="c1e" style="left:740.70px;top:736.48px;font-family:'Liberation Sans', sans-serif;font-size:16.5px;color:#232627;letter-spacing:0.000px;">MI</span><span class=t id="c2a" style="left:271.80px;top:761.48px;font-family:'Liberation Sans', sans-serif;font-size:16.5px;color:#232627;letter-spacing:0.000px;letter-spacing:0.02px">Línea 30</span><span class=t id="c2b" style="left:407.30px;top:761.48px;font-family:'Liberation Sans', sans-serif;font-size:16.5px;color:#232627;letter-spacing:0.000px;letter-spacing:0.16px">Acrílica</span><span class=t id="c2c" style="right:530.70px;top:761.48px;font-family:'Liberation Sans', sans-serif;font-size:16.5px;color:#232627;letter-spacing:0.000px;">1</span><span class=t id="c2d" style="right:456.40px;top:761.48px;font-family:'Liberation Sans', sans-serif;font-size:16.5px;color:#232627;letter-spacing:0.000px;">3.92</span><span class=t id="c2e" style="left:740.70px;top:761.48px;font-family:'Liberation Sans', sans-serif;font-size:16.5px;color:#232627;letter-spacing:0.000px;">MI</span><span class=t id="c3a" style="left:271.80px;top:786.48px;font-family:'Liberation Sans', sans-serif;font-size:16.5px;color:#232627;letter-spacing:0.000px;letter-spacing:0.02px">Línea 40</span><span class=t id="c3b" style="left:407.30px;top:786.48px;font-family:'Liberation Sans', sans-serif;font-size:16.5px;color:#232627;letter-spacing:0.000px;letter-spacing:0.16px">Acrílica antideslizante</span><span class=t id="c3c" style="right:530.70px;top:786.48px;font-family:'Liberation Sans', sans-serif;font-size:16.5px;color:#232627;letter-spacing:0.000px;">62</span><span class=t id="c3d" style="right:456.40px;top:786.48px;font-family:'Liberation Sans', sans-serif;font-size:16.5px;color:#232627;letter-spacing:0.000px;">133.07</span><span class=t id="c3e" style="left:740.70px;top:786.48px;font-family:'Liberation Sans', sans-serif;font-size:16.5px;color:#232627;letter-spacing:0.000px;">MI</span><span class=t id="c4a" style="left:271.80px;top:811.48px;font-family:'Liberation Sans', sans-serif;font-size:16.5px;color:#232627;letter-spacing:0.000px;letter-spacing:0.02px">Línea 50</span><span class=t id="c4b" style="left:407.30px;top:811.48px;font-family:'Liberation Sans', sans-serif;font-size:16.5px;color:#232627;letter-spacing:0.000px;letter-spacing:0.16px">Acrílica antideslizante</span><span class=t id="c4c" style="right:530.70px;top:811.48px;font-family:'Liberation Sans', sans-serif;font-size:16.5px;color:#232627;letter-spacing:0.000px;">9</span><span class=t id="c4d" style="right:456.40px;top:811.48px;font-family:'Liberation Sans', sans-serif;font-size:16.5px;color:#232627;letter-spacing:0.000px;">27.00</span><span class=t id="c4e" style="left:740.70px;top:811.48px;font-family:'Liberation Sans', sans-serif;font-size:16.5px;color:#232627;letter-spacing:0.000px;">MI</span><span class=t id="c5a" style="left:271.80px;top:836.48px;font-family:'Liberation Sans', sans-serif;font-size:16.5px;color:#232627;letter-spacing:0.000px;letter-spacing:0.02px">Línea 7</span><span class=t id="c5b" style="left:407.30px;top:836.48px;font-family:'Liberation Sans', sans-serif;font-size:16.5px;color:#232627;letter-spacing:0.000px;letter-spacing:0.16px">Acrílica</span><span class=t id="c5c" style="right:530.70px;top:836.48px;font-family:'Liberation Sans', sans-serif;font-size:16.5px;color:#232627;letter-spacing:0.000px;">56</span><span class=t id="c5d" style="right:456.40px;top:836.48px;font-family:'Liberation Sans', sans-serif;font-size:16.5px;color:#232627;letter-spacing:0.000px;">56.29</span><span class=t id="c5e" style="left:740.70px;top:836.48px;font-family:'Liberation Sans', sans-serif;font-size:16.5px;color:#232627;letter-spacing:0.000px;">MI</span><span class=t id="c6a" style="left:271.80px;top:861.48px;font-family:'Liberation Sans', sans-serif;font-size:16.5px;color:#232627;letter-spacing:0.000px;letter-spacing:0.02px">Superficial</span><span class=t id="c6b" style="left:407.30px;top:861.48px;font-family:'Liberation Sans', sans-serif;font-size:16.5px;color:#232627;letter-spacing:0.000px;letter-spacing:0.16px">Acrílica</span><span class=t id="c6c" style="right:530.70px;top:861.48px;font-family:'Liberation Sans', sans-serif;font-size:16.5px;color:#232627;letter-spacing:0.000px;">28</span><span class=t id="c6d" style="right:456.40px;top:861.48px;font-family:'Liberation Sans', sans-serif;font-size:16.5px;color:#232627;letter-spacing:0.000px;">28.00</span><span class=t id="c6e" style="left:740.70px;top:861.48px;font-family:'Liberation Sans', sans-serif;font-size:16.5px;color:#232627;letter-spacing:0.000px;">ud</span><span class=t id="c7a" style="left:271.80px;top:886.48px;font-family:'Liberation Sans', sans-serif;font-size:16.5px;color:#232627;letter-spacing:0.000px;letter-spacing:0.02px">Superficial</span><span class=t id="c7b" style="left:407.30px;top:886.48px;font-family:'Liberation Sans', sans-serif;font-size:16.5px;color:#232627;letter-spacing:0.000px;letter-spacing:0.16px">Acrílica</span><span class=t id="c7c" style="right:530.70px;top:886.48px;font-family:'Liberation Sans', sans-serif;font-size:16.5px;color:#232627;letter-spacing:0.000px;">10</span><span class=t id="c7d" style="right:456.40px;top:886.48px;font-family:'Liberation Sans', sans-serif;font-size:16.5px;color:#232627;letter-spacing:0.000px;">20.31</span><span class=t id="c7e" style="left:740.70px;top:886.48px;font-family:'Liberation Sans', sans-serif;font-size:16.5px;color:#232627;letter-spacing:0.000px;">m²</span><svg style="position:absolute;left:0;top:0" width="0" height="0"><defs>
<radialGradient id="tile" cx="50%" cy="45%" r="60%"><stop offset="0" stop-color="#eef3f8"/><stop offset="0.55" stop-color="#c9d6e4"/><stop offset="1" stop-color="#8096b2"/></radialGradient>
<radialGradient id="tiled" cx="50%" cy="45%" r="60%"><stop offset="0" stop-color="#eeeeee"/><stop offset="1" stop-color="#cfcfcf"/></radialGradient>
<linearGradient id="docg" x1="0" x2="1"><stop offset="0" stop-color="#f2c55a"/><stop offset="0.45" stop-color="#fbf0c0"/><stop offset="0.55" stop-color="#e8f3fb"/><stop offset="1" stop-color="#6aaee0"/></linearGradient>
</defs></svg><svg style="position:absolute;left:19px;top:70px" width="16" height="19" viewBox="0 0 16 19"><path d="M1 1 H9.5 L14.5 6 V18 H1 Z" fill="url(#docg)" stroke="#111" stroke-width="1.3"/><path d="M9.5 1 V6 H14.5" fill="#fff" stroke="#111" stroke-width="1"/></svg><svg style="position:absolute;left:47px;top:69px" width="22" height="21" viewBox="0 0 22 21"><path d="M4 1 H11 L15 5 V14 H4 Z" fill="url(#docg)" stroke="#222" stroke-width="1"/><path d="M1 20 L3.5 9 H20.5 L18 20 Z" fill="#fff" stroke="#555" stroke-width="1.1"/><path d="M1 20 V10.5 H4" fill="none" stroke="#777" stroke-width="1"/></svg><svg style="position:absolute;left:80px;top:69px" width="19" height="21" viewBox="0 0 19 21"><path d="M5 1 H12 L16 5 V12 H5 Z" fill="url(#docg)" stroke="#222" stroke-width="1"/><rect x="1" y="8" width="12.5" height="11" rx="1.5" fill="#f4f4f4" stroke="#6a6a6a" stroke-width="1.2"/><rect x="3.5" y="14" width="7.5" height="5" fill="#fff" stroke="#777" stroke-width="0.9"/></svg><svg style="position:absolute;left:126px;top:70px" width="20" height="19" viewBox="0 0 20 19"><path d="M1 12 L5 8 H15 L11 12 Z M1 14.5 L5 10.5 M1 17 H11 L15 13 M1 14.5 H11 L15 10.5" fill="#fff" stroke="#111" stroke-width="1.3"/><path d="M1 12 V17" stroke="#111" stroke-width="1.2"/><rect x="10.5" y="1" width="8" height="8" fill="#2f9a55"/><path d="M14.5 2.5 V7.5 M12 5 H17" stroke="#fff" stroke-width="1.6"/></svg><svg style="position:absolute;left:158px;top:74px" width="14" height="11" viewBox="0 0 14 11"><rect x="0.8" y="0.8" width="12.4" height="9.4" fill="none" stroke="#b54a5a" stroke-width="1.5"/></svg><svg style="position:absolute;left:184px;top:71px" width="15" height="15" viewBox="0 0 15 15"><path d="M1 6 L5 2 L9 6" fill="#d92a2a"/><rect x="1" y="6" width="7" height="8" fill="#fff" stroke="#222" stroke-width="1"/><rect x="6" y="4" width="8" height="9" fill="#fff" stroke="#222" stroke-width="1"/><path d="M7.5 6.5 H12.5 M7.5 9 H12.5 M9.8 4 V13 M2.5 9 H6 M2.5 11.5 H6" stroke="#222" stroke-width="0.9"/></svg><svg style="position:absolute;left:218px;top:73px" width="30" height="16" viewBox="0 0 30 16"><path d="M1 6.5 Q8.5 -1.5 16 6.5 Q8.5 13 1 6.5 Z" fill="#fff" stroke="#666" stroke-width="1.2"/><circle cx="8.5" cy="6" r="3.2" fill="#555"/><circle cx="8.5" cy="6" r="1.2" fill="#999"/><circle cx="13" cy="11" r="4" fill="#2fb030"/><path d="M13 8.3 V13.7 M10.3 11 H15.7" stroke="#fff" stroke-width="1.5"/><path d="M20 5 H28 L24 9 Z" fill="#9a9a9a"/></svg><svg style="position:absolute;left:255px;top:68px" width="23" height="23" viewBox="0 0 23 23"><path d="M17 20 L22.8 22.8 L20.5 16.5 Z" fill="#5f6f86"/><rect x="1" y="1" width="19.5" height="19.5" rx="5.5" fill="url(#tile)" stroke="#5f6f86" stroke-width="1.6"/><path d="M5 11.5 V6 Q5 4.5 6.2 4.5 Q7.4 4.5 7.4 6 V4.2 Q7.4 2.8 8.6 2.8 Q9.8 2.8 9.8 4.2 V4.4 Q9.8 3.2 11 3.2 Q12.2 3.2 12.2 4.6 V6.2 Q12.2 5.2 13.3 5.2 Q14.4 5.2 14.4 6.6 V11.5 L15.6 10 Q16.9 9.2 17.1 10.6 L14.8 15.6 Q13.3 18.2 10.3 18.2 H8.3 Q5 18.2 5 14.2 Z" fill="#fff" stroke="#2a2a2a" stroke-width="0.9"/><path d="M7.4 6 V10.5 M9.8 4.4 V10.5 M12.2 6.2 V10.5" stroke="#444" stroke-width="0.9"/></svg><div style="position:absolute;left:349px;top:65px;width:26px;height:28px;background:#d2d2d2;border-radius:3px"></div><svg style="position:absolute;left:287px;top:68px" width="23" height="23" viewBox="0 0 23 23"><path d="M17 20 L22.8 22.8 L20.5 16.5 Z" fill="#5f6f86"/><rect x="1" y="1" width="19.5" height="19.5" rx="5.5" fill="url(#tile)" stroke="#5f6f86" stroke-width="1.6"/><rect x="6" y="6" width="9.5" height="9.5" fill="#87a9d6" stroke="#111" stroke-width="1.4"/><path d="M10.75 1.5 L8.5 4.5 H13 Z M10.75 20 L8.5 17 H13 Z M1.5 10.75 L4.5 8.5 V13 Z M20 10.75 L17 8.5 V13 Z" fill="#f07a26"/></svg><svg style="position:absolute;left:319px;top:68px" width="23" height="23" viewBox="0 0 23 23"><path d="M17 20 L22.8 22.8 L20.5 16.5 Z" fill="#5f6f86"/><rect x="1" y="1" width="19.5" height="19.5" rx="5.5" fill="url(#tile)" stroke="#5f6f86" stroke-width="1.6"/><rect x="8" y="8" width="5.5" height="5.5" fill="#fff" stroke="#111" stroke-width="1.3"/><path d="M10.75 2.5 L8.5 5.5 H13 Z M10.75 19 L8.5 16 H13 Z M2.5 10.75 L5.5 8.5 V13 Z M19 10.75 L16 8.5 V13 Z" fill="#f07a26"/></svg><svg style="position:absolute;left:351px;top:68px" width="23" height="23" viewBox="0 0 23 23"><path d="M17 20 L22.8 22.8 L20.5 16.5 Z" fill="#5f6f86"/><rect x="1" y="1" width="19.5" height="19.5" rx="5.5" fill="url(#tile)" stroke="#5f6f86" stroke-width="1.6"/><rect x="4" y="4" width="7.5" height="7" fill="#a9c4e6" stroke="#2358b8" stroke-width="1.3"/><path d="M14.5 9.5 V18 M10.2 13.8 H18.8" stroke="#f07a26" stroke-width="2.3"/></svg><svg style="position:absolute;left:383px;top:68px" width="23" height="23" viewBox="0 0 23 23"><path d="M17 20 L22.8 22.8 L20.5 16.5 Z" fill="#5f6f86"/><rect x="1" y="1" width="19.5" height="19.5" rx="5.5" fill="url(#tile)" stroke="#5f6f86" stroke-width="1.6"/><rect x="4" y="4" width="7.5" height="7" fill="#a9c4e6" stroke="#2358b8" stroke-width="1.3"/><path d="M10.2 14.5 H18.8" stroke="#f07a26" stroke-width="2.3"/></svg><svg style="position:absolute;left:415px;top:68px" width="23" height="23" viewBox="0 0 23 23"><path d="M17 20 L22.8 22.8 L20.5 16.5 Z" fill="#5f6f86"/><rect x="1" y="1" width="19.5" height="19.5" rx="5.5" fill="url(#tile)" stroke="#5f6f86" stroke-width="1.6"/><circle cx="10.75" cy="10.75" r="6.3" fill="#2f8fd8" stroke="#2250a0" stroke-width="1"/><path d="M7 7.5 Q9 6 9.5 9 Q8 11 9.5 13.5 L8 15 Q6 12 7 7.5 Z M12 6 Q15 7 15.5 10 Q13.5 11 12.5 9 Z M12.5 12.5 Q14.5 12 14 15 Z" fill="#52b043"/></svg><svg style="position:absolute;left:447px;top:68px" width="23" height="23" viewBox="0 0 23 23"><path d="M17 20 L22.8 22.8 L20.5 16.5 Z" fill="#5f6f86"/><rect x="1" y="1" width="19.5" height="19.5" rx="5.5" fill="url(#tile)" stroke="#5f6f86" stroke-width="1.6"/><path d="M3.5 11 L9 6.5 V9 H11 V13 H9 V15.5 Z" fill="#f07a26"/><path d="M12 13 L14 9 H16 L14 13 Z M16 13 L18 9 H19.5 L17.5 13 Z" fill="#b35a2a"/></svg><svg style="position:absolute;left:479px;top:68px" width="23" height="23" viewBox="0 0 23 23"><path d="M17 20 L22.8 22.8 L20.5 16.5 Z" fill="#b9b9b9"/><rect x="1" y="1" width="19.5" height="19.5" rx="5.5" fill="url(#tiled)" stroke="#b9b9b9" stroke-width="1.6"/><path d="M17.5 11 L12 6.5 V9 H10 V13 H12 V15.5 Z" fill="#f4f4f4" stroke="#bbb" stroke-width="0.6"/><path d="M3 13 L5 9 H7 L5 13 Z M7 13 L9 9 H10 L8 13 Z" fill="#c8c8c8"/></svg><svg style="position:absolute;left:511px;top:68px" width="23" height="23" viewBox="0 0 23 23"><path d="M17 20 L22.8 22.8 L20.5 16.5 Z" fill="#b9b9b9"/><rect x="1" y="1" width="19.5" height="19.5" rx="5.5" fill="url(#tiled)" stroke="#b9b9b9" stroke-width="1.6"/><rect x="5" y="5" width="11.5" height="11.5" fill="none" stroke="#c3c3c3" stroke-width="1.2"/><rect x="7.5" y="7.5" width="6.5" height="6.5" fill="none" stroke="#c3c3c3" stroke-width="1"/></svg><svg style="position:absolute;left:543px;top:68px" width="23" height="22" viewBox="0 0 23 22"><g fill="url(#tile)" stroke="#5f6f86" stroke-width="1.2"><rect x="1" y="1" width="9.5" height="9.5" rx="3"/><rect x="11" y="1" width="9.5" height="9.5" rx="3"/><rect x="1" y="11" width="9.5" height="9.5" rx="3"/><rect x="11" y="11" width="9.5" height="9.5" rx="3"/></g><g font-family="Liberation Sans" font-size="8.5" fill="#111"><text x="3.2" y="8.8">a</text><text x="13.2" y="8.8">b</text><text x="3.2" y="18.8">c</text><text x="13.2" y="18.8">d</text></g></svg><svg style="position:absolute;left:574px;top:70px" width="19" height="19" viewBox="0 0 19 19"><rect x="3" y="3" width="13" height="13" fill="#fbf7dc"/><path d="M1 9.5 H18 M9.5 1 V18" stroke="#5a2a2a" stroke-width="1.2"/><rect x="6.3" y="6.3" width="6.4" height="6.4" fill="#b33bb5" stroke="#7a1a7a" stroke-width="0.8"/></svg><svg style="position:absolute;left:618px;top:70px" width="16" height="17" viewBox="0 0 16 17"><rect x="1" y="1" width="14" height="15" fill="#fff" stroke="#111" stroke-width="1.6"/><path d="M1 5.5 H15" stroke="#111" stroke-width="1.2"/><path d="M3 3 H13 M3 8 H5 M7 8 H13 M3 10.5 H5 M7 10.5 H13 M3 13 H5 M7 13 H13" stroke="#555" stroke-width="0.9"/></svg><svg style="position:absolute;left:663px;top:69px" width="18" height="19" viewBox="0 0 18 19"><rect x="1" y="1" width="16" height="17" rx="4" fill="#6a9ec4" stroke="#3f6f95" stroke-width="1.2"/><path d="M4 5 H7 M4.5 7.5 H7 V15 M3.8 15 H8.2" stroke="#fff" stroke-width="2"/><path d="M9.5 7.5 H14 M9.5 10 H14 M9.5 12.5 H14 M9.5 15 H14" stroke="#fff" stroke-width="1.3"/></svg><svg style="position:absolute;left:696px;top:70px" width="17" height="18" viewBox="0 0 17 18"><rect x="1" y="3" width="14.5" height="13.5" fill="#fff" stroke="#111" stroke-width="1.5"/><path d="M6 3 V16.5" stroke="#111" stroke-width="1.2"/><path d="M2.5 6 H4.5 M2.5 9 H4.5 M2.5 12 H4.5" stroke="#666"/><rect x="7.5" y="8" width="7" height="4" fill="#ef6a2a"/><rect x="11" y="1" width="4.5" height="6" fill="#e53030"/><path d="M8 14 H14" stroke="#999"/></svg><svg style="position:absolute;left:724px;top:72px" width="20" height="17" viewBox="0 0 20 17"><path d="M1 7 L9 3 L19 5 L11 9 Z" fill="#4e7a5a" stroke="#2f4a34" stroke-width="0.8"/><path d="M1 10 L9 6 L19 8 L11 12 Z" fill="#d9d24a" stroke="#5a5a2a" stroke-width="0.8"/><path d="M1 13 L9 9 L19 11 L11 15 Z" fill="#4e7a5a" stroke="#2f4a34" stroke-width="0.8"/><rect x="12" y="9" width="3.5" height="7" fill="#222"/><rect x="16" y="9" width="3.5" height="7" fill="#222"/></svg><svg style="position:absolute;left:747px;top:68px" width="38" height="23" viewBox="0 0 38 23"><rect x="2" y="2" width="13.5" height="13.5" fill="#cfe0f0" stroke="#6b8bb0" stroke-width="1.2"/><path d="M2 8 L8 2 M2 14 L14 2 M6 15.5 L15.5 6 M12 15.5 L15.5 12" stroke="#5f8ab5" stroke-width="1.2"/><circle cx="2" cy="2" r="1.4" fill="#6b8bb0"/><circle cx="15.5" cy="2" r="1.4" fill="#6b8bb0"/><circle cx="2" cy="15.5" r="1.4" fill="#6b8bb0"/><circle cx="15.5" cy="15.5" r="1.4" fill="#6b8bb0"/><path d="M19 1 V14 M17.5 1 H20.5 M17.5 14 H20.5 M1 20 H15 M1 18.5 V21.5 M15 18.5 V21.5" stroke="#6aaee0" stroke-width="1.1"/><path d="M23 10 H31 L27 14 Z" fill="#9a9a9a"/></svg><svg style="position:absolute;left:799px;top:68px" width="36" height="22" viewBox="0 0 36 22"><g fill="#dcdcdc" stroke="#b0b0b0" stroke-width="0.8"><rect x="1" y="5" width="3" height="3"/><rect x="1" y="11" width="3" height="3"/><rect x="1" y="17" width="3" height="3"/><rect x="7" y="8" width="5" height="5"/><rect x="7" y="15" width="5" height="5"/><rect x="13" y="12" width="3" height="6"/><rect x="23" y="6" width="3" height="5"/></g><rect x="9" y="2" width="12" height="3" fill="#f5c518" stroke="#c9a010" stroke-width="0.6"/><path d="M15 5.5 V18 L18 15 L20.5 20.5 L22.5 19.5 L20 14.3 H24 Z" fill="#fff" stroke="#111" stroke-width="1.1"/><path d="M27 4.5 H35 L31 8.5 Z" fill="#9a9a9a"/></svg><svg style="position:absolute;left:842px;top:69px" width="20" height="20" viewBox="0 0 20 20"><g fill="#e0e0e0" stroke="#c4c4c4" stroke-width="1"><rect x="1" y="2" width="11" height="13"/><rect x="4" y="7" width="10" height="10"/><rect x="15" y="1" width="3.5" height="18"/></g></svg><svg style="position:absolute;left:874px;top:71px" width="20" height="17" viewBox="0 0 20 17"><path d="M5 1 H18 L14 6 H1 Z" fill="#fff" stroke="#111" stroke-width="1.3"/><path d="M5 8 H18 L14 13 H1 Z" fill="#fff" stroke="#111" stroke-width="1.3"/><path d="M1 14.5 H14 L18 9.5" fill="none" stroke="#f5c518" stroke-width="2"/></svg><svg style="position:absolute;left:905px;top:69px" width="22" height="21" viewBox="0 0 22 21"><rect x="1" y="1" width="10" height="9" fill="#fdd835" stroke="#d4a300"/><rect x="12" y="1" width="8" height="9" fill="#d8d8d8" stroke="#999"/><rect x="1" y="11" width="8" height="8.5" fill="#d8d8d8" stroke="#999"/><rect x="10" y="11" width="10" height="8.5" fill="#fdd835" stroke="#d4a300"/><g font-family="Liberation Sans" font-size="8" fill="#111"><text x="3.5" y="8.5">a</text><text x="13.5" y="8.5">b</text><text x="2.5" y="18">b</text><text x="12.5" y="18">a</text></g></svg><svg style="position:absolute;left:937px;top:69px" width="22" height="21" viewBox="0 0 22 21"><g fill="#fdd835" stroke="#d4a300"><rect x="1" y="1" width="11" height="10"/><rect x="13" y="1" width="7.5" height="10"/><rect x="1" y="12" width="8" height="8"/><rect x="10" y="12" width="10.5" height="8"/></g></svg><svg style="position:absolute;left:969px;top:69px" width="22" height="21" viewBox="0 0 22 21"><rect x="1" y="1" width="8" height="10" fill="#d8d8d8" stroke="#999"/><rect x="12" y="1" width="8.5" height="10" fill="#d8d8d8" stroke="#999"/><rect x="1" y="12" width="8" height="8" fill="#fdd835" stroke="#d4a300"/><rect x="10" y="12" width="10.5" height="8" fill="#fdd835" stroke="#d4a300"/><path d="M1 3 L9 11" stroke="#fdd835" stroke-width="0"/><path d="M2 1 L20 20" stroke="#3a6a8a" stroke-width="1.3"/><path d="M1 1 V11 H8 Z" fill="#fdd835"/></svg><svg style="position:absolute;left:1001px;top:69px" width="22" height="21" viewBox="0 0 22 21"><g fill="#d6d6d6" stroke="#c8c8c8"><rect x="1" y="1" width="9" height="10"/><rect x="12" y="1" width="8.5" height="10"/><rect x="1" y="12" width="7.5" height="8"/><rect x="10" y="12" width="10.5" height="8"/></g></svg><svg style="position:absolute;left:1049px;top:68px" width="18" height="22" viewBox="0 0 18 22"><rect x="1" y="3" width="11" height="14" fill="none" stroke="#c8c8c8" stroke-width="1.2"/><rect x="4" y="1" width="5" height="3" fill="#eee" stroke="#c8c8c8"/><rect x="7" y="9" width="9.5" height="12" fill="#d4d4d4" stroke="#bcbcbc"/></svg><svg style="position:absolute;left:1080px;top:69px" width="14" height="20" viewBox="0 0 14 20"><rect x="1" y="2" width="12" height="16" fill="#d8d8d8" stroke="#b5b5b5"/><path d="M3.5 8 H10.5 M3.5 11 H10.5 M3.5 14 H8" stroke="#aaa"/><path d="M1 2 L4 0.5 V4" fill="none" stroke="#bbb"/></svg><svg style="position:absolute;left:1104px;top:69px" width="19" height="20" viewBox="0 0 19 20"><rect x="1.5" y="5" width="6.5" height="11" rx="2" fill="#444"/><rect x="10" y="5" width="6.5" height="11" rx="2" fill="#444"/><rect x="2.5" y="1" width="4" height="6" fill="#666"/><rect x="11" y="1" width="4" height="6" fill="#666"/><rect x="7" y="7" width="4" height="4" fill="#333"/><path d="M8 18 L17.5 8.5" stroke="#f0d040" stroke-width="1.8"/><path d="M17.5 8.5 L18.5 7.5" stroke="#e03030" stroke-width="1.8"/></svg><svg style="position:absolute;left:1147px;top:69px" width="19" height="20" viewBox="0 0 19 20"><rect x="1" y="1" width="17" height="18" fill="#c6f04a" stroke="#4a8a2a" stroke-width="1.2"/><path d="M3 3.5 L6.5 6 L3 8.5" fill="none" stroke="#111" stroke-width="1.3"/><path d="M7 9 H10" stroke="#111" stroke-width="1.1"/><circle cx="12" cy="13" r="3.5" fill="none" stroke="#3faa2f" stroke-width="1.8" stroke-dasharray="1.5 1"/><circle cx="4.5" cy="15.5" r="2.5" fill="none" stroke="#3faa2f" stroke-width="1.5" stroke-dasharray="1.2 0.8"/></svg><svg style="position:absolute;left:16px;top:104px" width="21" height="21" viewBox="0 0 21 21"><path d="M1 15 L5 11 H17 L13 15 Z M1 17.5 H13 L17 13.5 M1 20 H13 L17 16 M1 15 V20" fill="#fff" stroke="#111" stroke-width="1.3"/><path d="M8 12 L6.5 4 L9.5 1 L12.5 3.5 L11 11.5 Z" fill="#f25a1a" stroke="#a02a0a" stroke-width="0.8"/><path d="M9.3 12.5 L8.3 10 H10.8 Z" fill="#222"/></svg><svg style="position:absolute;left:60px;top:103px" width="19" height="20" viewBox="0 0 19 20"><rect x="1" y="2" width="8" height="11" fill="#e0aa70" stroke="#a06a3a" stroke-width="0.8"/><path d="M3 6 L5 4 L7 6 M3 9 H7" stroke="#8a5a2a" stroke-width="0.8" fill="none"/><rect x="1" y="13" width="8" height="3" fill="#555"/><rect x="10" y="11" width="7" height="5" fill="#555"/><path d="M13.5 1 V7.5" stroke="#1f4fd8" stroke-width="2.6"/><path d="M10.3 6.5 H16.7 L13.5 10.5 Z" fill="#1f4fd8"/><path d="M1 17 H17" stroke="#3ab03a" stroke-width="1.6"/><circle cx="3" cy="17" r="1.6" fill="#3ab03a"/><circle cx="15" cy="17" r="1.6" fill="#3ab03a"/></svg><svg style="position:absolute;left:86px;top:103px" width="19" height="20" viewBox="0 0 19 20"><rect x="1" y="2" width="8" height="11" fill="#d0d0d0" stroke="#777" stroke-width="0.8"/><path d="M2.5 5 H7.5 M2.5 8 H7.5" stroke="#888" stroke-width="0.8"/><rect x="1" y="13" width="8" height="3" fill="#555"/><rect x="10" y="11" width="7" height="5" fill="#555"/><path d="M13.5 1 V7.5" stroke="#1f4fd8" stroke-width="2.6"/><path d="M10.3 6.5 H16.7 L13.5 10.5 Z" fill="#1f4fd8"/><path d="M1 17 H17" stroke="#3ab03a" stroke-width="1.6"/><circle cx="3" cy="17" r="1.6" fill="#3ab03a"/><circle cx="15" cy="17" r="1.6" fill="#3ab03a"/></svg><svg style="position:absolute;left:114px;top:103px" width="17" height="20" viewBox="0 0 17 20"><rect x="1" y="4" width="10" height="13" fill="#d4d4d4" stroke="#777" stroke-width="0.8"/><path d="M2.5 7 H9.5 M2.5 10 H9.5 M2.5 13 H9.5" stroke="#999" stroke-width="0.8"/><rect x="1" y="15" width="10" height="2.5" fill="#555"/><path d="M12 1.5 V8.5 M8.5 5 H15.5" stroke="#3ab03a" stroke-width="2.6"/></svg><svg style="position:absolute;left:139px;top:103px" width="18" height="21" viewBox="0 0 18 21"><rect x="6" y="1" width="11" height="7" fill="#a02030" stroke="#701020" stroke-width="0.8"/><circle cx="5" cy="7" r="4.2" fill="#7aa8e0" stroke="#4a78b0"/><path d="M3 6 H7 L6 5 M7 8 H3 L4 9" stroke="#fff" stroke-width="0.9" fill="none"/><rect x="1" y="13" width="6" height="6" fill="#f6d090" stroke="#c09a50"/><rect x="10" y="13" width="7" height="6" fill="#8ac07a" stroke="#4a8a3a"/><path d="M5 11 V13 M5 11.5 H13 V13" stroke="#666" stroke-width="0.8" fill="none"/></svg><svg style="position:absolute;left:165px;top:103px" width="18" height="20" viewBox="0 0 18 20"><rect x="1" y="3" width="8" height="12" fill="#d0d0d0" stroke="#777" stroke-width="0.8"/><path d="M2.5 6 H7.5 M2.5 9 H7.5" stroke="#999" stroke-width="0.8"/><circle cx="11.5" cy="6" r="4.5" fill="#fff" stroke="#444" stroke-width="0.9"/><path d="M11.5 3.5 V6 H13.5" stroke="#222" stroke-width="0.9" fill="none"/><path d="M1 17 H16" stroke="#555" stroke-width="1.3"/><circle cx="7" cy="17.5" r="1.7" fill="#3ab03a"/></svg><svg style="position:absolute;left:204px;top:104px" width="17" height="19" viewBox="0 0 17 19"><circle cx="8.5" cy="6" r="4.8" fill="#d9822b" stroke="#a5591a" stroke-width="0.8"/><path d="M1 18 Q1 11 8.5 11 Q16 11 16 18 Z" fill="#d9822b" stroke="#a5591a" stroke-width="0.8"/><path d="M12.5 4 Q14 6 12.5 8.5" stroke="#eee" stroke-width="1" fill="none"/></svg>
</body></html>
